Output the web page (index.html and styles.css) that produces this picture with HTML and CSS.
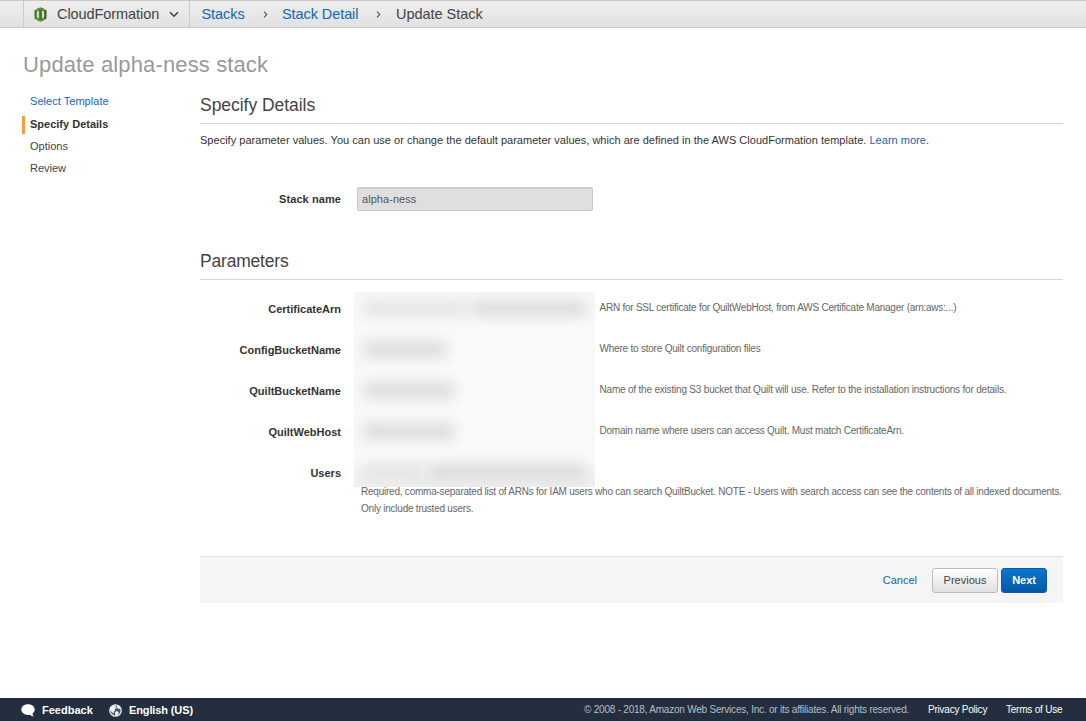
FILE: index.html
```html
<!DOCTYPE html>
<html lang="en">
<head>
<meta charset="utf-8">
<title>Update Stack</title>
<link rel="stylesheet" href="styles.css">
</head>
<body>
<header class="topbar">
  <div class="service">
    <svg class="logo" width="13" height="15" viewBox="0 0 13 15">
      <path d="M0.5 3.2L4 2v11L0.5 11.8z" fill="#4b7a24"/>
      <path d="M12.5 3.2L9 2v11l3.500-1.2z" fill="#3c6420"/>
      <path d="M3 1.600L6.500 0.3 10 1.600v11.800l-3.500 1.300L3 13.400z" fill="#5f9232"/>
      <path d="M2.800 4.400l2.400-.6v7.400l-2.400-.6zM10.200 4.400l-2.400-.6v7.400l2.400-.6z" fill="#d3dfc8"/>
      <path d="M5.200 2.500h2.600v10H5.200z" fill="#49752a"/>
    </svg>
    <span class="service-name">CloudFormation</span>
    <svg class="caret" width="10" height="7" viewBox="0 0 10 7"><path d="M1 1.200l4 4 4-4" fill="none" stroke="#444" stroke-width="1.600"/></svg>
  </div>
  <nav class="crumbs">
    <a class="crumb stacks">Stacks</a>
    <svg class="sep" width="5" height="7" viewBox="0 0 5 7"><path d="M1 .7l2.800 2.800L1 6.300" fill="none" stroke="#555" stroke-width="1.100"/></svg>
    <a class="crumb detail">Stack Detail</a>
    <svg class="sep" width="5" height="7" viewBox="0 0 5 7"><path d="M1 .7l2.800 2.800L1 6.300" fill="none" stroke="#555" stroke-width="1.100"/></svg>
    <span class="crumb current">Update Stack</span>
  </nav>
</header>

<main class="page">
  <h1 class="title"><span>Update alpha-ness stack</span></h1>
  <div class="columns">
    <ul class="steps">
      <li class="step link"><span>Select Template</span></li>
      <li class="step active"><span>Specify Details</span></li>
      <li class="step"><span>Options</span></li>
      <li class="step"><span>Review</span></li>
    </ul>
    <section class="content">
      <h2 class="heading">Specify Details</h2>
      <p class="intro">Specify parameter values. You can use or change the default parameter values, which are defined in the AWS CloudFormation template. <a>Learn more</a>.</p>
      <div class="name-row">
        <label class="label stack-label">Stack name</label>
        <div class="input">alpha-ness</div>
      </div>
      <h2 class="heading params-heading">Parameters</h2>
      <div class="params">
        <div class="labels">
          <label class="label">CertificateArn</label>
          <label class="label">ConfigBucketName</label>
          <label class="label">QuiltBucketName</label>
          <label class="label">QuiltWebHost</label>
          <label class="label">Users</label>
        </div>
        <div class="redacted">
          <div class="blur-row"><i class="smudge w-a"></i><i class="smudge w-b dark"></i></div>
          <div class="blur-row"><i class="smudge w-c dark"></i></div>
          <div class="blur-row"><i class="smudge w-d dark"></i></div>
          <div class="blur-row"><i class="smudge w-d dark"></i></div>
          <div class="blur-row last"><i class="smudge w-e"></i><i class="smudge w-f dark"></i></div>
        </div>
        <div class="notes">
          <p class="note cert">ARN for SSL certificate for QuiltWebHost, from AWS Certificate Manager (arn:aws:...)</p>
          <p class="note">Where to store Quilt configuration files</p>
          <p class="note bucket">Name of the existing S3 bucket that Quilt will use. Refer to the installation instructions for details.</p>
          <p class="note">Domain name where users can access Quilt. Must match CertificateArn.</p>
        </div>
      </div>
      <p class="users-note">Required, comma-separated list of ARNs for IAM users who can search QuiltBucket. NOTE - Users with search access can see the contents of all indexed documents.<br>Only include trusted users.</p>
      <div class="actions">
        <a class="cancel">Cancel</a>
        <button class="btn previous">Previous</button>
        <button class="btn next">Next</button>
      </div>
    </section>
  </div>
</main>

<footer class="footer">
  <svg class="bubble" width="14" height="13" viewBox="0 0 14 13"><path d="M7 .3C10.700 .3 13.700 2.500 13.700 5.600c0 1.700-.8 3-2.200 4 .1 1.200.6 2.200 1.300 3-1.500-.1-2.800-.8-3.700-1.800-.7.1-1.400.2-2.100.2C3.300 11 .3 8.700.3 5.600S3.300.3 7 .3z" fill="#fff"/></svg>
  <span class="foot-bold feedback">Feedback</span>
  <svg class="globe" width="13" height="13" viewBox="0 0 13 13"><circle cx="6.500" cy="6.500" r="5.700" fill="#4a5461" stroke="#e9ebed" stroke-width="1.300"/><path d="M1.300 3.500L4 1.200l3 .1-.4 1.700 1.200.8-1.800 1.400-.3 1.600-.8 1 .3 1.500-2-.8-2.200-2.500zM8.200 1.300l2.500 1.300.9 2-2 .4-1.700-1.500zM7 7l1.800.4 1 1.300-1.500 2.500-1.800.5-.5-2.600z" fill="#f3f4f5"/></svg>
  <span class="foot-bold language">English (US)</span>
  <span class="copyright">© 2008 - 2018, Amazon Web Services, Inc. or its affiliates. All rights reserved.</span>
  <a class="foot-link privacy">Privacy Policy</a>
  <a class="foot-link terms">Terms of Use</a>
</footer>
</body>
</html>
```
FILE: styles.css
```css
* { box-sizing: border-box; }
body {
  margin: 0;
  height: 721px;
  display: flex;
  flex-direction: column;
  overflow: hidden;
  background: #fff;
  color: #444;
  font: 11px/16px "Liberation Sans", Arial, sans-serif;
  white-space: nowrap;
}
h1, h2, p, ul { margin: 0; padding: 0; font-weight: normal; }
a { color: #1166bb; }

.topbar {
  height: 28px;
  display: flex;
  padding-left: 23px;
  border-top: 1px solid #c9c9c9;
  border-bottom: 1px solid #c9c9c9;
  background: linear-gradient(#eee, #e1e1e1);
  font-size: 14.5px;
  line-height: 26px;
}
.service {
  width: 167px;
  display: flex;
  align-items: center;
  padding-left: 10px;
  border-left: 1px solid #ccc;
  border-right: 1px solid #ccc;
}
.service-name { width: 103px; margin-left: 10px; letter-spacing: -.07px; }
.caret { margin-left: 9px; }
.crumbs { display: flex; align-items: center; padding-left: 11.5px; }
.crumb { flex: none; }
.stacks { width: 61.5px; letter-spacing: -.05px; }
.detail { width: 94px; margin-left: 14px; letter-spacing: -.08px; }
.current { margin-left: 15px; letter-spacing: -.03px; }
.sep { flex: none; }

.page { flex: 1; padding: 23px 23px 0 22px; }
.title { height: 42px; padding-left: 1px; line-height: 28px; font-size: 22px; letter-spacing: .13px; color: #999; }
.columns { display: flex; }
.steps { width: 178px; flex: none; list-style: none; }
.step { height: 18px; margin-bottom: 4px; padding-left: 8px; line-height: 17px; }
.step.link { color: #1166bb; margin-bottom: 5px; letter-spacing: .04px; }
.step.active { padding-left: 5px; border-left: 3px solid #ff9c3a; font-weight: bold; color: #333; }

.content { flex: 1; min-width: 0; }
.heading { height: 31px; border-bottom: 1px solid #d4d4d4; font-size: 17.5px; line-height: 24px; letter-spacing: -.04px; }
.intro { margin-top: 8px; letter-spacing: .021px; color: #333; }
.name-row { display: flex; align-items: center; margin-top: 39px; }
.label { display: block; width: 141px; text-align: right; font-weight: bold; color: #333; }
.stack-label { letter-spacing: .08px; }
.input {
  width: 236px;
  height: 24px;
  margin-left: 16px;
  padding-left: 4px;
  border: 1px solid #c8c8c8;
  border-radius: 2px;
  background: #dfdfdf;
  box-shadow: inset 0 1px 1px #d0d0d0;
  line-height: 22px;
  letter-spacing: .05px;
  color: #555;
}
.params-heading { margin-top: 38px; letter-spacing: -.2px; }
.params { display: flex; height: 207px; }
.labels { display: flex; flex-direction: column; gap: 25px; padding-top: 21px; }
.notes { display: flex; flex-direction: column; gap: 25px; margin-left: 4.5px; padding-top: 20px; }
.redacted {
  width: 241px;
  height: 195px;
  margin: 12px 0 0 13px;
  overflow: hidden;
  background: #fafafa;
  box-shadow: inset 0 0 8px #f4f4f4;
}
.blur-row { height: 41px; display: flex; gap: 5px; padding: 8px 9px 0; }
.blur-row.last { padding-top: 8px; background: linear-gradient(#fafafa, #f3f3f3 40%, #ededed); }
.smudge { height: 17px; background: #e4e4e4; filter: blur(7px); }
.dark { background: #dcdcdc; }
.w-a { width: 104px; }
.w-b { width: 115px; }
.w-c { width: 84px; }
.w-d { width: 92px; }
.w-e { width: 62px; }
.w-f { width: 158px; }
.note, .users-note { font-size: 10px; letter-spacing: -.215px; color: #666; }
.note.cert { letter-spacing: -.24px; }
.note.bucket { letter-spacing: -.195px; }
.users-note { height: 72px; margin-top: -3px; margin-left: 161px; line-height: 16.500px; letter-spacing: -.228px; }
.actions {
  height: 47px;
  display: flex;
  justify-content: flex-end;
  align-items: center;
  padding-right: 16px;
  border-top: 1px solid #e2e2e2;
  background: #f5f5f5;
}
.cancel { margin-right: 15px; }
.btn {
  height: 25px;
  padding: 0;
  border: 1px solid #bbb;
  border-radius: 3px;
  font: 11px/16px "Liberation Sans", Arial, sans-serif;
  color: #444;
}
.previous { width: 66px; background: linear-gradient(#fff, #e0e0e0); }
.next { width: 46px; margin-left: 3px; border-color: #0a5ba6; background: linear-gradient(#0c76cf, #0459a8); color: #fff; font-weight: bold; letter-spacing: -.1px; }

.footer {
  height: 23px;
  display: flex;
  align-items: center;
  padding: 1px 0 0 21px;
  background: #232f3e;
  color: #fff;
}
.foot-bold { font-weight: bold; }
.feedback { width: 52px; margin-left: 7px; }
.globe { margin-left: 15px; }
.language { width: 64px; margin-left: 7px; letter-spacing: -.12px; }
.copyright { width: 325px; margin-left: 391px; font-size: 10px; letter-spacing: -.22px; color: #b8bec4; }
.foot-link { font-size: 10px; letter-spacing: -.22px; color: #fff; }
.privacy { width: 60px; margin-left: 19px; }
.terms { margin-left: 18px; }
```
